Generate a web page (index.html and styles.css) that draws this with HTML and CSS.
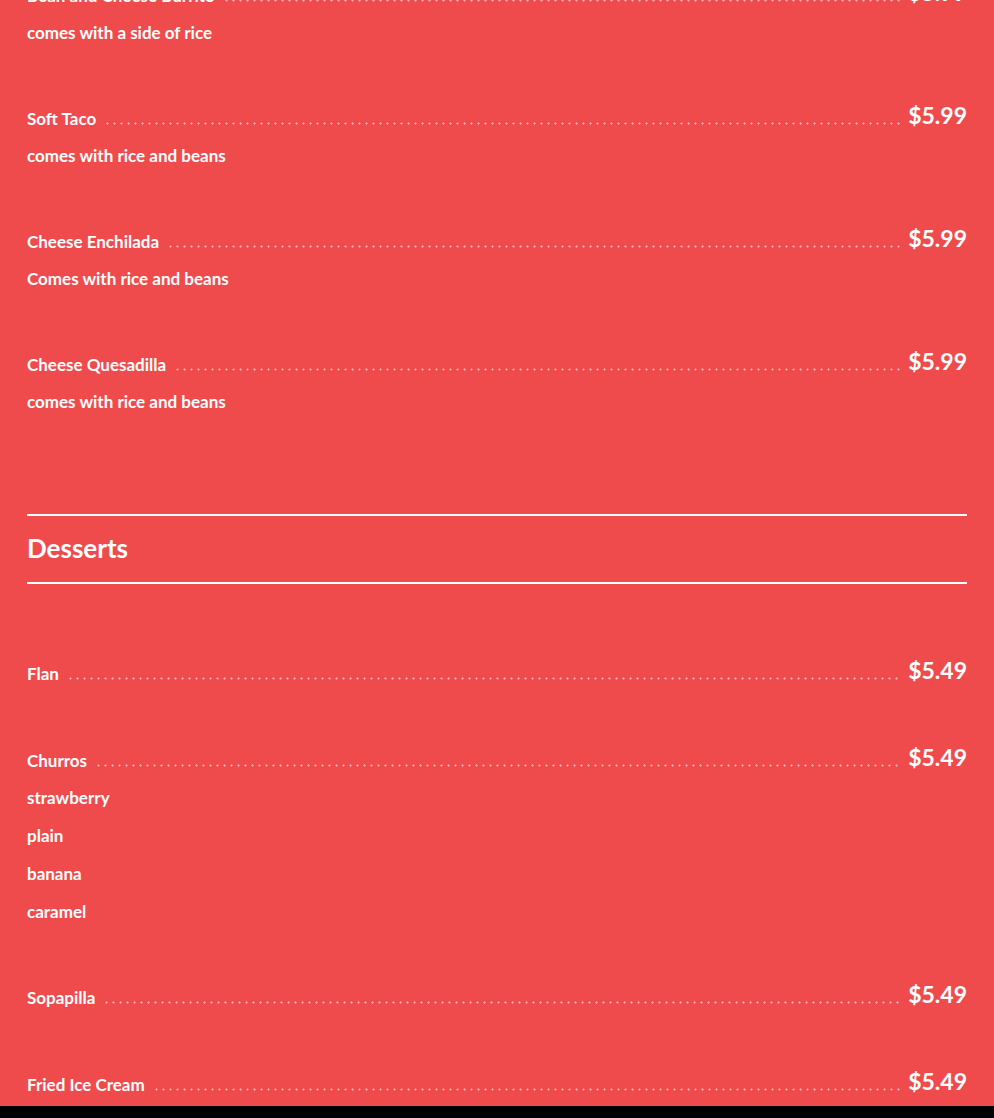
FILE: index.html
```html
<!DOCTYPE html>
<html lang="en">
<head>
<meta charset="utf-8">
<title>Menu</title>
<link rel="stylesheet" href="styles.css">
</head>
<body>
<main class="menu">
  <section class="category">
    <div class="item">
      <div class="row"><span class="name">Bean and Cheese Burrito</span><span class="leader"></span><span class="price">$5.99</span></div>
      <div class="descs"><div class="desc">comes with a side of rice</div></div>
    </div>
    <div class="item">
      <div class="row"><span class="name">Soft Taco</span><span class="leader"></span><span class="price">$5.99</span></div>
      <div class="descs"><div class="desc">comes with rice and beans</div></div>
    </div>
    <div class="item">
      <div class="row"><span class="name">Cheese Enchilada</span><span class="leader"></span><span class="price">$5.99</span></div>
      <div class="descs"><div class="desc">Comes with rice and beans</div></div>
    </div>
    <div class="item">
      <div class="row"><span class="name">Cheese Quesadilla</span><span class="leader"></span><span class="price">$5.99</span></div>
      <div class="descs"><div class="desc">comes with rice and beans</div></div>
    </div>
  </section>
  <section class="category">
    <h2 class="category-title">Desserts</h2>
    <div class="item">
      <div class="row"><span class="name">Flan</span><span class="leader"></span><span class="price">$5.49</span></div>
    </div>
    <div class="item">
      <div class="row"><span class="name">Churros</span><span class="leader"></span><span class="price">$5.49</span></div>
      <div class="descs">
        <div class="desc">strawberry</div>
        <div class="desc">plain</div>
        <div class="desc">banana</div>
        <div class="desc">caramel</div>
      </div>
    </div>
    <div class="item">
      <div class="row"><span class="name">Sopapilla</span><span class="leader"></span><span class="price">$5.49</span></div>
    </div>
    <div class="item">
      <div class="row"><span class="name">Fried Ice Cream</span><span class="leader"></span><span class="price">$5.49</span></div>
    </div>
  </section>
</main>
<footer class="footer"></footer>
</body>
</html>
```
FILE: styles.css
```css
html, body {
  margin: 0;
  padding: 0;
}
body {
  background: #ef4b4c;
  color: #ffffff;
  font-family: "Lato", "Noto Sans", sans-serif;
  font-weight: 700;
  height: 1118px;
  overflow: hidden;
  display: flex;
  flex-direction: column;
}
.menu {
  padding: 0 27px;
  margin-top: -22px;
  flex: 1 1 0;
  min-height: 0;
  overflow: hidden;
}
.category {
  display: flex;
  flex-direction: column;
}
.item {
  display: flex;
  flex-direction: column;
  margin-bottom: 51px;
}
.row {
  display: flex;
  align-items: baseline;
  height: 36px;
  line-height: 36px;
}
.name {
  font-size: 17px;
  white-space: nowrap;
}
.leader {
  flex: 1;
  height: 3px;
  margin: 0 6px 0 8px;
  background-image: radial-gradient(circle at center, rgba(255,255,255,0.5) 0.9px, rgba(255,255,255,0) 1.4px);
  background-size: 7px 3px;
  background-repeat: repeat-x;
}
.price {
  font-size: 23px;
  line-height: 28px;
  align-self: flex-start;
}
.descs {
  display: flex;
  flex-direction: column;
  gap: 2px;
  margin-top: 1px;
  margin-bottom: -1px;
}
.desc {
  font-size: 17px;
  line-height: 36px;
  height: 36px;
}
.category-title {
  margin: 44px 0 72px;
  border-top: 2px solid #ffffff;
  border-bottom: 2px solid #ffffff;
  font-size: 26px;
  font-weight: 700;
  line-height: 64px;
  padding-bottom: 2px;
}
.footer {
  height: 12px;
  background: #000000;
  flex: none;
}
```
